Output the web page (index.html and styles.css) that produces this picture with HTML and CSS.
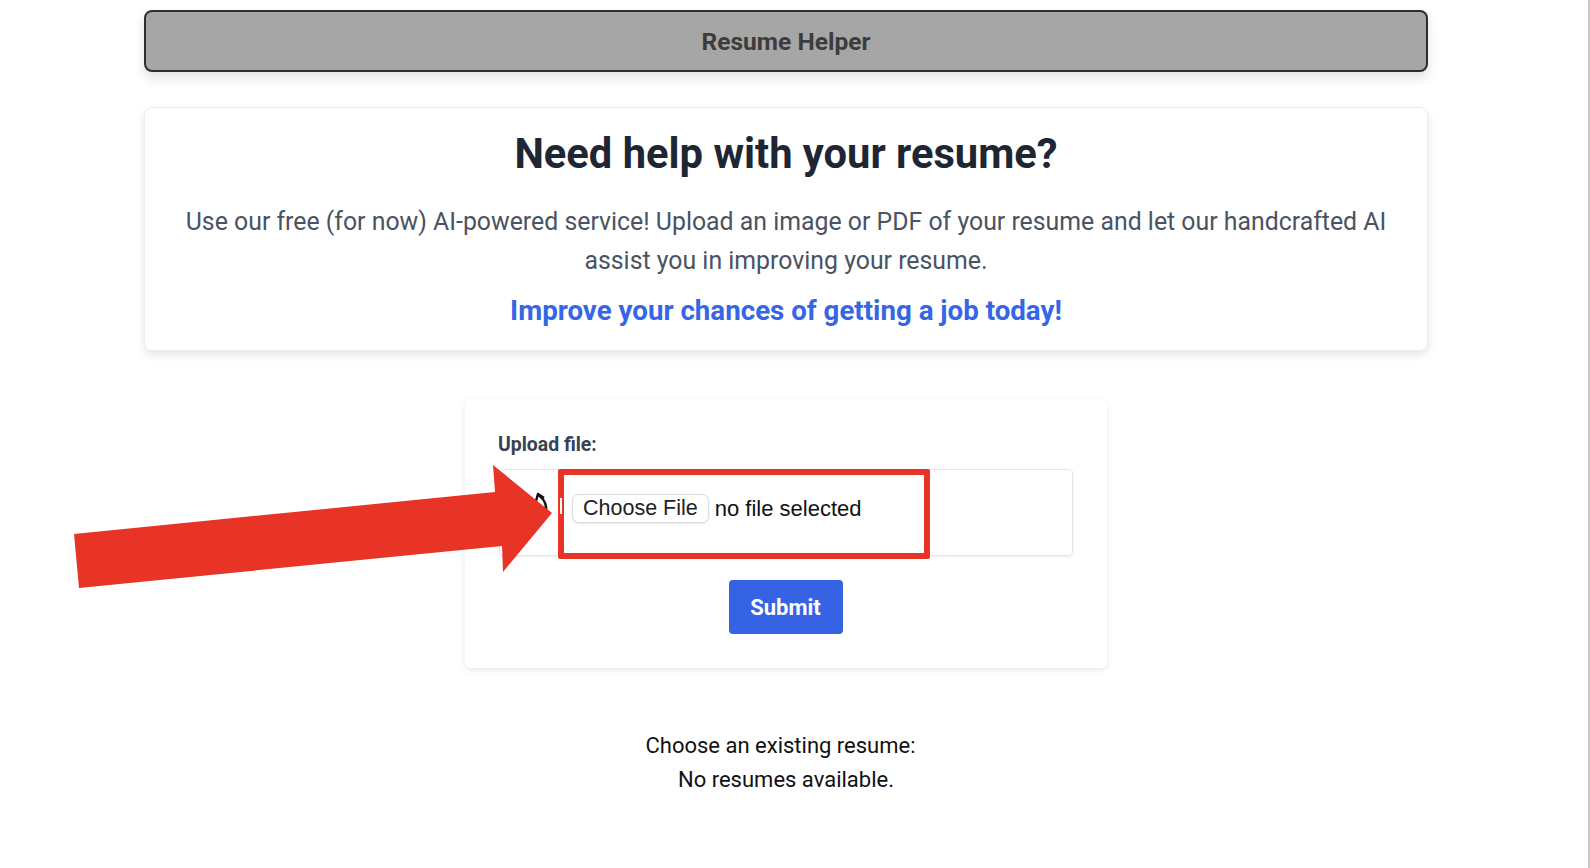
FILE: index.html
```html
<!DOCTYPE html>
<html lang="en">
<head>
<meta charset="utf-8">
<title>Resume Helper</title>
<link rel="stylesheet" href="styles.css">
</head>
<body>
<div class="page">
  <main class="content">
    <header class="topbar">Resume Helper</header>

    <section class="hero">
      <h1 class="hero-title">Need help with your resume?</h1>
      <p class="hero-text">Use our free (for now) AI-powered service! Upload an image or PDF of your resume and let our handcrafted AI assist you in improving your resume.</p>
      <p class="hero-cta">Improve your chances of getting a job today!</p>
    </section>

    <section class="upload-card">
      <label class="upload-label">Upload file:</label>
      <div class="file-field">
        <span class="file-button">Choose File</span>
        <span class="file-name">no file selected</span>
      </div>
      <div class="submit-row">
        <button class="submit-btn" type="button">Submit</button>
      </div>
    </section>

    <section class="existing">
      <div class="existing-label">Choose an existing resume:</div>
      <div class="existing-empty">No resumes available.</div>
    </section>
  </main>
  <div class="scroll-edge"></div>

  <div class="annot-box"></div>
  <svg class="annot-arrow" width="1590" height="868" viewBox="0 0 1590 868" aria-hidden="true">
    <path d="M536 501 l2 -7 l6 4" fill="none" stroke="#111" stroke-width="2.5" stroke-linejoin="round"/>
    <path d="M538 495 q7 4 8 12 q1 9 -8 11" fill="none" stroke="#111" stroke-width="2.5"/>
    <rect x="560" y="498" width="2" height="16" fill="#ffffff"/>
    <polygon points="74,534 495,492 493,465 552,513 503,572 502,546 79,588" fill="#e83426"/>
  </svg>
</div>
</body>
</html>
```

FILE: styles.css
```css
* { box-sizing: border-box; }

html, body {
  margin: 0;
  padding: 0;
  background: #ffffff;
}

body {
  font-family: Roboto, "Liberation Sans", Arial, sans-serif;
  color: #111;
}

.page {
  position: relative;
  display: flex;
  width: 1590px;
  height: 868px;
  overflow: hidden;
}

.content {
  flex: 1;
  display: flex;
  flex-direction: column;
  padding: 10px 0 0 144px;
}

.scroll-edge {
  width: 2px;
  background: #c9c9c9;
}

.topbar {
  width: 1284px;
  height: 62px;
  display: flex;
  align-items: center;
  justify-content: center;
  background: #a6a6a6;
  border: 2px solid #2e2e2e;
  border-radius: 8px;
  box-shadow: 0 6px 12px rgba(0, 0, 0, 0.12);
  font-size: 24.5px;
  font-weight: 700;
  color: #3c3c3c;
}

.hero {
  width: 1284px;
  margin-top: 35px;
  height: 244px;
  border: 1px solid #ececec;
  border-radius: 8px;
  background: #fff;
  box-shadow: 0 4px 8px rgba(0, 0, 0, 0.1);
  text-align: center;
  padding: 21px 30px 0;
}

.hero-title {
  margin: 0;
  font-size: 41.7px;
  line-height: 50px;
  font-weight: 700;
  color: #1f2633;
}

.hero-text {
  margin: 24px 0 0;
  font-size: 24.85px;
  line-height: 38.5px;
  color: #4a5361;
}

.hero-cta {
  margin: 13px 0 0;
  font-size: 27.7px;
  line-height: 36px;
  font-weight: 700;
  color: #3566e6;
}

.upload-card {
  align-self: flex-start;
  margin-left: 321px;
  margin-top: 49px;
  width: 642px;
  height: 268px;
  background: #fff;
  border-radius: 6px;
  box-shadow: 0 2px 6px rgba(0, 0, 0, 0.1);
  padding: 33px 34px 0 33px;
  display: flex;
  flex-direction: column;
}

.upload-label {
  font-size: 19.4px;
  line-height: 24px;
  font-weight: 700;
  color: #374151;
}

.file-field {
  margin-top: 12px;
  margin-left: 1px;
  height: 87px;
  border: 1px solid #e6e6e6;
  border-radius: 4px;
  box-shadow: 0 1px 3px rgba(0, 0, 0, 0.08);
  display: flex;
  align-items: center;
  padding: 0 0 8px 72px;
}

.file-button {
  height: 29px;
  padding: 0 10px;
  display: inline-flex;
  align-items: center;
  border: 1px solid #dcdcdc;
  border-radius: 7px;
  background: #fff;
  box-shadow: 0 1px 2px rgba(0, 0, 0, 0.1);
  font-family: "Liberation Sans", Arial, sans-serif;
  font-size: 21.5px;
  color: #222;
}

.file-name {
  margin-left: 6px;
  font-family: "Liberation Sans", Arial, sans-serif;
  font-size: 22px;
  color: #111;
}

.submit-row {
  display: flex;
  justify-content: center;
  margin-top: 24px;
}

.submit-btn {
  width: 114px;
  height: 54px;
  border: none;
  border-radius: 4px;
  background: #3563e3;
  color: #fff;
  font-family: Roboto, "Liberation Sans", Arial, sans-serif;
  font-size: 22px;
  font-weight: 700;
}

.existing {
  width: 1284px;
  margin-top: 61px;
  text-align: center;
  font-size: 22px;
  line-height: 33.5px;
  color: #111;
}

.existing-label {
  padding-right: 11px;
}

.annot-box {
  position: absolute;
  left: 558px;
  top: 469px;
  width: 372px;
  height: 90px;
  border: 6px solid #e83426;
  border-radius: 2px;
}

.annot-arrow {
  position: absolute;
  left: 0;
  top: 0;
  pointer-events: none;
}
```
